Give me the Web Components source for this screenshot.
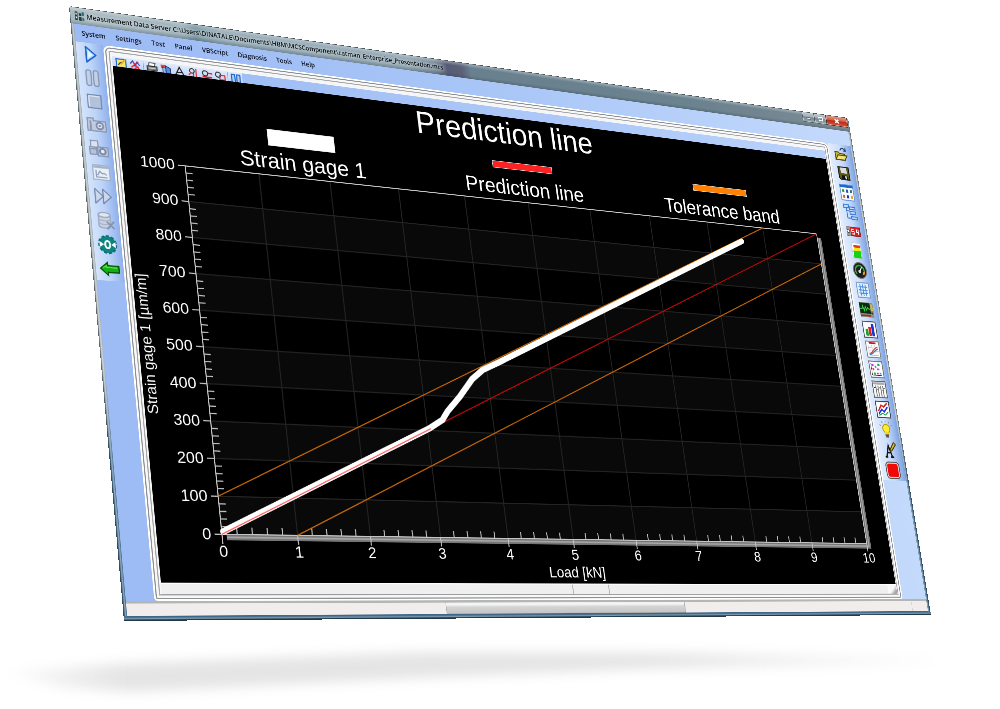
<!DOCTYPE html>
<html lang="en">
<head>
<meta charset="utf-8">
<title>Measurement Data Server</title>
<style>
    body {
        margin: 0;
        background: #fff;
        font-family: "Open Sans", "Noto Sans", sans-serif;
    }
</style>
</head>
<body>
<tilted-stage>
    <app-window caption="Measurement Data Server C:\Users\DINATALE\Documents\HBM\MCSComponent\catman_Enterprise_Presentation.mcs">
        <menu-bar slot="menu" items="System,Settings,Test,Panel,VBScript,Diagnosis,Tools,Help"></menu-bar>
        <tool-column slot="left" icons="play,pause,stop,camera,cameras,window,forward,database,zero,back"></tool-column>
        <chart-panel>
            <prediction-chart>
                <span slot="title">Prediction line</span>
                <legend-entry slot="legend" style="--color: #fff; --size: 31px">Strain gage 1</legend-entry>
                <legend-entry slot="legend" style="--color: #f22; --size: 14px">Prediction line</legend-entry>
                <legend-entry slot="legend" style="--color: #ff8205; --size: 14px">Tolerance band</legend-entry>
            </prediction-chart>
        </chart-panel>
        <tool-column slot="right" class="right" icons="folder,save,grid,tree,digits,bargraph,gauge,table,scope,bars,curve,scatter,columns,lines,bulb,text,record"></tool-column>
    </app-window>
</tilted-stage>

<script>
const ICONS = {
    play: '<path d="M9 3 L25 16 L9 29 Z" fill="#a9dcff" stroke="#1d5fc4" stroke-width="2.5" stroke-linejoin="round"/><path d="M12 9v13l8-6z" fill="#e6f6ff"/>',
    pause: '<rect x="6" y="3" width="8" height="26" rx="3" fill="#c3cfe2" stroke="#8394b5" stroke-width="2"/><rect x="18" y="3" width="8" height="26" rx="3" fill="#c3cfe2" stroke="#8394b5" stroke-width="2"/>',
    stop: '<rect x="5" y="5" width="22" height="22" fill="#b3c2db" stroke="#7486ab" stroke-width="2"/><path d="M7 25V7h18" fill="none" stroke="#e3eaf5" stroke-width="2"/>',
    camera: '<path d="M1 9V5h10v4h20v17H1z" fill="#c0cbdf" stroke="#8997b3" stroke-width="2"/><path d="M6 9v17" stroke="#8997b3" stroke-width="3"/><circle cx="21" cy="17" r="7" fill="#7f8fae"/><circle cx="21" cy="17" r="4" fill="#dfe7f3"/><circle cx="21" cy="17" r="2" fill="#7d8cab"/>',
    cameras: '<path d="M3 3h12v11H3z" fill="#dbe3f0" stroke="#8997b3" stroke-width="2"/><path d="M1 17V14h11v3" fill="none" stroke="#8997b3" stroke-width="2"/><path d="M1 17h11v9H1zM14 13h17v15H14z" fill="#b7c3da" stroke="#8997b3" stroke-width="2"/><circle cx="22" cy="20" r="6" fill="#7887a8"/><circle cx="22" cy="20" r="3" fill="#e8eef7"/>',
    window: '<rect x="3" y="4" width="27" height="24" fill="#e9eff8" stroke="#a3b1ca" stroke-width="2"/><path d="M4 7h25" stroke="#a3b1ca" stroke-width="4"/><path d="M8 12v12h18M10 21l4-7 4 4 3-1 4 3" fill="none" stroke="#8d9cba" stroke-width="2"/>',
    forward: '<path d="M3 4l13 12L3 28zM16 4l13 12-13 12z" fill="#cbd8ec" stroke="#7889ae" stroke-width="2" stroke-linejoin="round"/>',
    database: '<path d="M5 7v18c0 5 19 5 19 0V7" fill="#c9d2e0" stroke="#98a5bd" stroke-width="2"/><ellipse cx="14.500" cy="7" rx="9.500" ry="4" fill="#dfe6f0" stroke="#98a5bd" stroke-width="2"/><path d="M5 13c0 5 19 5 19 0M5 19c0 5 19 5 19 0" fill="none" stroke="#a9b4c9" stroke-width="2"/><path d="M18 18l12 11M30 17L18 30" stroke="#8594b2" stroke-width="3"/>',
    zero: '<circle cx="16" cy="16" r="14" fill="#0d857f"/><circle cx="16" cy="16" r="14" fill="none" stroke="#0b6f74" stroke-width="3" stroke-dasharray="5 3"/><path d="M3 11l7 5-7 5zM29 11l-7 5 7 5z" fill="#fff"/><ellipse cx="16" cy="16" rx="4" ry="6" fill="none" stroke="#fff" stroke-width="3"/>',
    back: '<path d="M1 16L13 6v5h18v11H13v5z" fill="#12b010" stroke="#064d06" stroke-width="2"/><path d="M5 15l6-4v3h17" fill="none" stroke="#4fe24c" stroke-width="2"/>',
    folder: '<path d="M3 12h8l3 3h11v12H3z" fill="#c9b338" stroke="#4d4310" stroke-width="2"/><path d="M3 27l6-9h21l-6 9z" fill="#f1e27a" stroke="#4d4310" stroke-width="2"/><path d="M15 9c3-6 9-6 12-1M28 3v6h-6" fill="none" stroke="#223a66" stroke-width="2"/>',
    save: '<path d="M4 4h24v24H7l-3-3z" fill="#5c5c14" stroke="#111" stroke-width="2"/><path d="M9 5h14v11H9z" fill="#d8dde4"/><path d="M10 20h13v8H10z" fill="#111"/><path d="M18 21h3v6h-3z" fill="#eee"/>',
    grid: '<rect x="1" y="1" width="30" height="30" fill="#fff" stroke="#6b9bdc" stroke-width="2"/><path d="M1 4h30" stroke="#1f66cc" stroke-width="5"/><path d="M5 10h5v6H5z" fill="#2f9f32"/><path d="M14 10h5v6h-5z" fill="#2b52c9"/><path d="M23 10h5v6h-5z" fill="#1d7c80"/><path d="M5 21h5v6H5z" fill="#e6672b"/><path d="M14 21h5v6h-5z" fill="#2432b0"/><path d="M23 21h5v6h-5z" fill="#e3a41f"/>',
    tree: '<g fill="#b9dcff" stroke="#3f79d8" stroke-width="2"><path d="M8 9v19h8M8 14h8M16 21h4" fill="none"/><path d="M2 2h12v6H2zM15 6h13v5H15zM15 15h13v5H15zM17 25h13v5H17z"/></g>',
    digits: '<rect x="0" y="8" width="32" height="17" fill="#d61d1d" stroke="#701414" stroke-width="1"/><rect x="0" y="8" width="9" height="17" fill="#999"/><circle cx="4" cy="16" r="3" fill="#fff" stroke="#333"/><path d="M17 12h-5v4h5v5h-5M23 11v6h5M27 12v10" fill="none" stroke="#fff" stroke-width="2"/>',
    bargraph: '<rect x="6" y="1" width="20" height="30" fill="#fff" stroke="#b9bfd0"/><path d="M10 5h15v5H10z" fill="#e43a2c"/><path d="M10 10h15v6H10z" fill="#f6e21b"/><path d="M8 16h17v14H8z" fill="#14d314"/>',
    gauge: '<circle cx="16" cy="16" r="15" fill="#1b1f1b" stroke="#777" stroke-width="2"/><path d="M8 23a10 10 0 1 1 16-1" fill="none" stroke="#2fae3c" stroke-width="3"/><path d="M25 18a10 10 0 0 1-3 6" fill="none" stroke="#e59c1f" stroke-width="4"/><path d="M15 18l6-9" stroke="#fff" stroke-width="2"/><circle cx="15" cy="18" r="3" fill="#ddd"/>',
    table: '<rect x="2" y="2" width="28" height="28" fill="#e4f1ff" stroke="#7b98c0" stroke-width="2"/><path d="M6 10h20M6 16h20M6 22h20M10 5v22M16 5v22M22 5v22" stroke="#4a90de" stroke-width="2"/>',
    scope: '<rect x="0" y="2" width="32" height="28" fill="#8d8d7a"/><rect x="1" y="3" width="24" height="20" fill="#0b2a12"/><path d="M2 14h4l2-5 3 9 3-8 2 6 3-4 2 2h4" fill="none" stroke="#35d14b" stroke-width="2"/><path d="M1 27h23" stroke="#a22" stroke-width="3"/><rect x="26" y="5" width="5" height="12" fill="#c9b94c"/><circle cx="28" cy="22" r="2" fill="#333"/>',
    bars: '<rect x="1" y="1" width="30" height="30" fill="#fff" stroke="#555" stroke-width="2"/><path d="M6 15h6v13H6z" fill="#15a22b"/><path d="M13 11h6v17h-6z" fill="#e22020"/><path d="M20 5h6v23h-6z" fill="#1c33cf"/>',
    curve: '<rect x="1" y="1" width="30" height="30" fill="#fdfdfd" stroke="#888" stroke-width="2"/><path d="M8 4h16" stroke="#b22" stroke-width="3"/><path d="M6 8v19h22M6 13h22M6 19h22M14 8v19M21 8v19" fill="none" stroke="#bbb"/><path d="M7 24c8-1 9-10 20-13" fill="none" stroke="#e33" stroke-width="2"/><path d="M7 26c9-1 11-9 20-11" fill="none" stroke="#37b" stroke-width="2"/>',
    scatter: '<rect x="1" y="1" width="30" height="30" fill="#fff" stroke="#777" stroke-width="2"/><path d="M6 6h5v4H6zM17 14h6v3h-6z" fill="#c43bd0"/><path d="M20 5h5v4h-5zM9 22h4v4H9z" fill="#1ba64a"/><path d="M13 9h4v4h-4zM22 22h4v3h-4z" fill="#279bd8"/><path d="M7 14h4v4H7zM16 22h4v3h-4z" fill="#e03a5c"/><path d="M5 5v22h22" fill="none" stroke="#222"/>',
    columns: '<rect x="1" y="1" width="30" height="30" fill="#fafafa" stroke="#666" stroke-width="2"/><path d="M3 5h26" stroke="#aaa" stroke-width="4"/><path d="M8 9v20M13 9v20M19 9v20M24 9v20" stroke="#777" stroke-width="2"/><path d="M3 13h4M9 16h3M15 13h3M20 18h3M25 14h4" stroke="#333"/>',
    lines: '<rect x="1" y="1" width="30" height="30" fill="#fff" stroke="#444" stroke-width="2"/><path d="M5 19l8-11 5 3 9-7" fill="none" stroke="#d92222" stroke-width="3"/><path d="M5 24l8-8 5 4 9-9" fill="none" stroke="#2037d8" stroke-width="3"/><path d="M5 27l9-4 6 3 7-6" fill="none" stroke="#1a9c37" stroke-width="2"/>',
    bulb: '<path d="M5 9l-3-2M9 4L7 1M16 2V0M23 4l2-3M27 9l3-2" stroke="#8b98ad" stroke-width="2"/><circle cx="16" cy="14" r="8" fill="#ffec2e" stroke="#b99c12" stroke-width="2"/><path d="M12 20h8v5h-8z" fill="#f3d91a"/><path d="M12 26h8M13 29h6" stroke="#555" stroke-width="3"/>',
    text: '<path d="M7 29L14 8l6 21M9 21h10M4 29h6M16 29h8" fill="none" stroke="#151515" stroke-width="3"/><path d="M18 14L27 2l4 4-10 11-5 2z" fill="#d9b92c" stroke="#4a3c08" stroke-width="2"/>',
    record: '<rect x="1" y="1" width="30" height="30" rx="7" fill="#ddd" stroke="#555" stroke-width="2"/><rect x="4" y="4" width="24" height="24" rx="4" fill="#f30808"/>',
    edit: '<rect x="3" y="4" width="25" height="22" fill="#f8e66a" stroke="#2766bd" stroke-width="3"/><path d="M8 20c4-8 10-9 12-6" fill="none" stroke="#333" stroke-width="3"/><path d="M14 18L27 3" stroke="#e5ad18" stroke-width="4"/>',
    clear: '<path d="M3 12l7-8 5 14 6-12 6 9" fill="none" stroke="#2c4bd0" stroke-width="3"/><path d="M5 22L24 5M9 5l19 23M12 26l12-8" stroke="#e21f2d" stroke-width="3"/>',
    print: '<path d="M9 3h16l-3 9H7z" fill="#fff" stroke="#333" stroke-width="2"/><path d="M3 12h26v11H3z" fill="#777" stroke="#222" stroke-width="2"/><path d="M7 17h18" stroke="#ddd" stroke-width="3"/>',
    copy: '<path d="M3 4h13v9H3z" fill="#e04a32"/><path d="M8 10h13v16H8z" fill="#8fc1f5" stroke="#225" stroke-width="2"/><path d="M16 6l12 6v16H16z" fill="#4d91e2" stroke="#225" stroke-width="2"/>',
    font: '<path d="M5 26L16 5l11 21M9 19h14" fill="none" stroke="#222" stroke-width="3"/>',
    cursor: '<circle cx="13" cy="10" r="6" fill="none" stroke="#333" stroke-width="3"/><path d="M24 3v27M10 15L4 22M17 15l-2 14" fill="none" stroke="#d22" stroke-width="3"/>',
    zoomx: '<circle cx="12" cy="12" r="7" fill="none" stroke="#333" stroke-width="3"/><path d="M20 11h11M4 22h26" stroke="#d22" stroke-width="4"/>',
    zoombox: '<circle cx="11" cy="11" r="7" fill="none" stroke="#333" stroke-width="3"/><path d="M15 12h14v12H15z" fill="none" stroke="#d22" stroke-width="3"/>',
    hold: '<path d="M4 5h9v25H4zM18 5h9v25h-9z" fill="#a8d0fb" stroke="#1d5fc4" stroke-width="3"/>'
};

const CORNERS = [[69, 6], [848, 118], [931, 615], [124, 621]];
const STAGE_WIDTH = 1000;

// perspective that lays a w x h box on the four corners (clockwise from top left)
function quadMatrix(w, h, corners) {
    const [[x0, y0], [x1, y1], [x2, y2], [x3, y3]] = corners;
    const dx1 = x1 - x2, dx2 = x3 - x2, dx3 = x0 - x1 + x2 - x3;
    const dy1 = y1 - y2, dy2 = y3 - y2, dy3 = y0 - y1 + y2 - y3;
    const den = dx1 * dy2 - dx2 * dy1;
    const g = (dx3 * dy2 - dx2 * dy3) / den;
    const k = (dx1 * dy3 - dx3 * dy1) / den;
    return [
        (x1 - x0 + g * x1) / w, (y1 - y0 + g * y1) / w, 0, g / w,
        (x3 - x0 + k * x3) / h, (y3 - y0 + k * y3) / h, 0, k / h,
        0, 0, 1, 0,
        x0, y0, 0, 1
    ];
}

class TiltedStage extends HTMLElement {
    constructor() {
        super();
        this.attachShadow({mode: 'open'});
        this.fit = this.fit.bind(this);
    }

    connectedCallback() {
        this.shadowRoot.innerHTML = `
            <style>
                :host {
                    display: block;
                    position: relative;
                    width: 100%;
                    aspect-ratio: 1000 / 709;
                    overflow: hidden;
                }

                .shadow {
                    position: absolute;
                    inset: 0;
                    width: 100%;
                    height: 100%;
                }

                .board {
                    position: absolute;
                    top: 0;
                    left: 0;
                    width: 1680px;
                    height: 1050px;
                    transform-origin: 0 0;
                }
            </style>

            <svg class="shadow" viewBox="0 0 1000 709" aria-hidden="true">
                <defs>
                    <linearGradient id="fade">
                        <stop offset="0" stop-color="#000" stop-opacity="0.02"/>
                        <stop offset="0.12" stop-color="#000" stop-opacity="0.1"/>
                        <stop offset="0.7" stop-color="#000" stop-opacity="0.1"/>
                        <stop offset="1" stop-color="#000" stop-opacity="0.01"/>
                    </linearGradient>
                    <filter id="soft" x="-10%" y="-60%" width="120%" height="220%"><feGaussianBlur stdDeviation="10 6"/></filter>
                </defs>
                <path d="M10 672 L110 664 L420 652 L700 653 L935 658 L930 664 L640 669 L420 678 L130 692 L60 687 Z" fill="url(#fade)" filter="url(#soft)"/>
            </svg>
            <div class="board"><slot></slot></div>
        `;
        this.fit();
        window.addEventListener('resize', this.fit);
    }

    disconnectedCallback() {
        window.removeEventListener('resize', this.fit);
    }

    fit() {
        const board = this.shadowRoot.querySelector('.board');
        const scale = this.clientWidth / STAGE_WIDTH;
        const corners = CORNERS.map(([x, y]) => [x * scale, y * scale]);
        board.style.transform = `matrix3d(${quadMatrix(board.offsetWidth, board.offsetHeight, corners).map(n => n.toFixed(9))})`;
    }
}

class AppWindow extends HTMLElement {
    constructor() {
        super();
        this.attachShadow({mode: 'open'});
    }

    connectedCallback() {
        // one span for each word or folder of the path
        const parts = this.getAttribute('caption').match(/[^ \\]+[ \\]?/g);
        this.shadowRoot.innerHTML = `
            <style>
                :host {
                    display: flex;
                    flex-direction: column;
                    box-sizing: border-box;
                    height: 100%;
                    padding: 1px 6px 8px;
                    border-radius: 5px 8px 0 0;
                    background:
                        linear-gradient(to top, #22394a 2px, #8ea5b5 3px, #3d678a 6px, transparent 9px),
                        linear-gradient(to right, rgba(40, 55, 65, 0.8), transparent 2px, rgba(255, 255, 255, 0.5) 3px, transparent 6px),
                        linear-gradient(to left, rgba(40, 55, 65, 0.6), transparent 3px, rgba(255, 255, 255, 0.5) 4px, transparent 7px),
                        linear-gradient(#99a6ad, #a9b3b9 60%, #47708f 75%, #3f6584);
                    box-shadow: inset 0 2px #4a545b;
                    overflow: hidden;
                }

                header {
                    display: flex;
                    align-items: center;
                    height: 30px;
                    margin: 0 -5px;
                    padding: 0 3px 0 7px;
                    background:
                        linear-gradient(rgba(255, 255, 255, 0.35), transparent 25%, transparent 75%, rgba(50, 65, 75, 0.3)),
                        linear-gradient(to right, #a9b9c0, #9bafb8 200px, #7896a4 225px, #93a9b4 270px, #8fa5b1 640px, #7b8c9b 695px, #555b74 725px, #5a6178 755px, #69808f 775px, #6b828f 1300px, #7c8b94);
                }

                .logo {
                    width: 18px;
                    height: 18px;
                    margin-right: 3px;
                }

                .caption {
                    flex: 1;
                    font-size: 12px;
                    font-weight: 600;
                    line-height: 20px;
                    white-space: pre;
                    color: #0b0f12;
                    text-shadow: 0 0 6px #dde6ea, 0 0 10px #dde6ea;
                }

                .buttons {
                    display: flex;
                    align-self: flex-start;
                }

                .buttons button {
                    display: flex;
                    align-items: center;
                    justify-content: center;
                    width: 31px;
                    height: 21px;
                    padding: 0;
                    border: 1px solid #47545d;
                    border-top: 0;
                    background: linear-gradient(#c3cdd3, #9eacb4 45%, #74858f 50%, #98a8b1);
                    box-shadow: inset 0 0 0 1px #c9d3d8;
                }

                .buttons .close {
                    width: 56px;
                    border-color: #4c1b14;
                    background: linear-gradient(#e09c8d, #cf5c45 45%, #b52b14 50%, #d4593d);
                    box-shadow: inset 0 0 0 1px #e9b0a3;
                }

                .client {
                    display: flex;
                    flex: 1;
                    flex-direction: column;
                    min-height: 0;
                    background: linear-gradient(to right, #9dbbf4, #a9c6f7 50%, #c4dafc);
                }

                .body {
                    display: grid;
                    flex: 1;
                    grid-template-columns: 48px minmax(0, 1fr) 60px;
                    min-height: 0;
                    border-bottom: 4px solid #b4b6b4;
                }

                footer {
                    display: grid;
                    grid-template-columns: 579fr 503fr 546fr 40fr;
                    height: 20px;
                    background: #f1eded;
                }

                footer div {
                    border-left: 1px solid #d0cccc;
                }

                footer div:first-child {
                    border-left: 0;
                }

                footer .bar {
                    border: 1px solid #aaa;
                    border-top-color: #eee;
                    background: linear-gradient(#f4f4f4 3px, #d4d4d4 7px, #c5c5c5);
                }
            </style>

            <header>
                <svg class="logo" viewBox="0 0 16 16" aria-hidden="true">
                    <path d="M1 1h4v14H1zM7 3h4v4H7zM7 9h4v6H7z" fill="#27343b"/>
                    <path d="M2 3h2v3H2zM2 9h2v3H2z" fill="#e6eef1"/>
                    <path d="M12 1h3v6h-3zM12 10h3v5h-3z" fill="#1f6d70"/>
                </svg>
                <span class="caption">${parts.map(part => `<span>${part}</span>`).join('')}</span>
                <div class="buttons">
                    <button aria-label="Minimize"><svg width="14" height="10"><path d="M2 6h10v3H2z" fill="#fff" stroke="#445"/></svg></button>
                    <button aria-label="Maximize"><svg width="14" height="12"><path d="M3 3h9v7H3z" fill="none" stroke="#fff" stroke-width="2"/></svg></button>
                    <button class="close" aria-label="Close"><svg width="14" height="12"><path d="M2 2l10 8M12 2L2 10" stroke="#fff" stroke-width="3"/></svg></button>
                </div>
            </header>
            <div class="client">
                <slot name="menu"></slot>
                <div class="body">
                    <slot name="left"></slot>
                    <slot></slot>
                    <slot name="right"></slot>
                </div>
                <footer><div></div><div class="bar"></div><div></div><div></div></footer>
            </div>
        `;
    }
}

class MenuBar extends HTMLElement {
    constructor() {
        super();
        this.attachShadow({mode: 'open'});
    }

    connectedCallback() {
        const items = this.getAttribute('items').split(',');
        this.shadowRoot.innerHTML = `
            <style>
                :host {
                    display: flex;
                    align-items: center;
                    height: 32px;
                    padding-left: 3px;
                }

                button {
                    padding: 0 9px;
                    border: 0;
                    background: none;
                    font: 600 12px/20px "Open Sans", "Noto Sans", sans-serif;
                    color: #0a1020;
                }
            </style>
            ${items.map(item => `<button>${item}</button>`).join('')}
        `;
    }
}

class ToolButton extends HTMLElement {
    constructor() {
        super();
        this.attachShadow({mode: 'open'});
    }

    connectedCallback() {
        const icon = this.getAttribute('icon');
        this.shadowRoot.innerHTML = `
            <style>
                :host {
                    display: flex;
                    align-items: center;
                    justify-content: center;
                }

                button {
                    display: block;
                    padding: 0;
                    border: 0;
                    background: none;
                }

                svg {
                    display: block;
                    width: var(--icon, 34px);
                    height: var(--icon, 34px);
                }
            </style>
            <button aria-label="${icon}"><svg viewBox="0 0 32 32">${ICONS[icon]}</svg></button>
        `;
    }
}

class ToolColumn extends HTMLElement {
    constructor() {
        super();
        this.attachShadow({mode: 'open'});
    }

    connectedCallback() {
        const icons = this.getAttribute('icons').split(',');
        this.shadowRoot.innerHTML = `
            <style>
                :host {
                    display: block;
                }

                .tools {
                    display: grid;
                    grid-auto-rows: 42px;
                    border-radius: 0 0 4px 0;
                    background: linear-gradient(to right, #d3e3fb, #bdd4f8 50%, #8fb0ec);
                }

                :host(.right) .tools {
                    --icon: 36px;
                    background: linear-gradient(to right, #e3edfd, #c9dcfa 50%, #7ea3e3);
                }
            </style>
            <div class="tools">
                ${icons.map(icon => `<tool-button icon="${icon}"></tool-button>`).join('')}
            </div>
        `;
    }
}

class ChartPanel extends HTMLElement {
    constructor() {
        super();
        this.attachShadow({mode: 'open'});
    }

    connectedCallback() {
        const button = icon => `<tool-button icon="${icon}"></tool-button>`;
        this.shadowRoot.innerHTML = `
            <style>
                :host {
                    display: flex;
                    flex-direction: column;
                    min-width: 0;
                    box-sizing: border-box;
                    padding: 18px 12px 10px 14px;
                    border-radius: 12px 12px 6px 6px;
                    background: #f6f6f6;
                    box-shadow:
                        inset 0 0 0 3px #fff,
                        inset 0 0 0 5px #8d8f90,
                        inset 0 0 0 9px #f8f8f8,
                        inset 0 0 0 11px #a4a6a8;
                }

                .strip {
                    height: 18px;
                    overflow: hidden;
                    background: linear-gradient(to right, #9dbbf4, #b9d2fb);
                }

                .tools {
                    --icon: 22px;
                    display: flex;
                    width: 238px;
                    padding: 1px 0 0 3px;
                    box-sizing: border-box;
                    background: linear-gradient(#dfeafc, #bcd3f8);
                }

                tool-button {
                    flex: 1;
                }

                .tools i {
                    width: 1px;
                    margin: 0 2px;
                    background: #86a3d6;
                }

                ::slotted(*) {
                    flex: 1;
                    min-height: 0;
                }

                .status {
                    display: grid;
                    grid-template-columns: 780fr 77fr 655fr 22fr;
                    height: 20px;
                    border-top: 2px solid #fff;
                    border-bottom: 1px solid #999;
                    box-sizing: border-box;
                    background: #efefef;
                }

                .status div + div {
                    border-left: 2px solid #b5b5b5;
                }

                .status .grip {
                    border-color: #fafafa;
                    background: linear-gradient(135deg, #f8f8f8 50%, #a9a9a9 80%);
                }
            </style>
            <div class="strip">
                <div class="tools">
                    ${['edit', 'clear'].map(button).join('')}<i></i>
                    ${['print', 'copy', 'font', 'cursor', 'zoomx', 'zoombox'].map(button).join('')}<i></i>
                    ${button('hold')}
                </div>
            </div>
            <slot></slot>
            <div class="status"><div></div><div></div><div></div><div class="grip"></div></div>
        `;
    }
}

class LegendEntry extends HTMLElement {
    constructor() {
        super();
        this.attachShadow({mode: 'open'});
    }

    connectedCallback() {
        this.shadowRoot.innerHTML = `
            <style>
                :host {
                    display: grid;
                    grid-template-rows: 31px 44px;
                    gap: 6px;
                    place-items: center;
                    font-size: 41px;
                    line-height: 44px;
                    white-space: nowrap;
                }

                .swatch {
                    width: 130px;
                    height: var(--size);
                    box-sizing: border-box;
                    border: 1px solid #ddd;
                    background: var(--color);
                }
            </style>
            <div class="swatch"></div>
            <div><slot></slot></div>
        `;
    }
}

class PredictionChart extends HTMLElement {
    constructor() {
        super();
        this.attachShadow({mode: 'open'});
        this.left = 114;
        this.top = 5;
        this.width = 1363;
        this.height = 641;
    }

    x(load) {
        return this.left + load * this.width / 10;
    }

    y(strain) {
        return this.top + this.height - strain * this.height / 1000;
    }

    line(x1, y1, x2, y2, name) {
        return `<path class="${name}" d="M${x1} ${y1}L${x2} ${y2}"/>`;
    }

    grid() {
        let out = '';
        for (let i = 1; i < 10; i += 2) {
            out += `<rect x="${this.left}" y="${this.y(i * 100)}" width="${this.width}" height="${this.height / 10}" fill="#090909"/>`;
        }
        for (let i = 1; i < 10; i++) {
            out += this.line(this.x(i), this.y(0), this.x(i), this.y(1000), 'grid');
            out += this.line(this.x(0), this.y(i * 100), this.x(10), this.y(i * 100), 'grid');
        }
        return out;
    }

    axes() {
        const bottom = this.y(0);
        const right = this.x(10);
        let out = `
            <path d="M${this.left + 8} ${bottom + 1}H${right + 1}V${this.top + 9}H${right + 10}V${bottom + 10}H${this.left + 8}Z" class="side"/>
            <path d="M${this.left + 8} ${bottom + 5}H${right + 5}V${this.top + 9}" class="bevel"/>`;
        out += this.line(this.left - 13, this.top, right, this.top, 'axis');
        out += this.line(this.left, this.top, this.left, bottom, 'axis');
        out += this.line(this.left, bottom, right, bottom, 'axis');
        out += this.line(right, this.top, right, bottom, 'axis');
        for (let i = 0; i <= 10; i++) {
            const x = this.x(i);
            const y = this.y(i * 100);
            out += this.line(x, bottom, x, bottom + 16, 'axis');
            out += this.line(this.left - 13, y, this.left, y, 'axis');
            out += `<text x="${x}" y="${bottom + 38}" text-anchor="middle">${i}</text>`;
            out += `<text x="${this.left - 19}" y="${y + 9}" text-anchor="end">${i * 100}</text>`;
            for (let k = 1; k < 5 && i < 10; k++) {
                const mx = this.x(i + k / 5);
                const my = this.y(i * 100 + k * 20);
                out += this.line(mx, bottom - 12, mx, bottom, 'axis');
                out += this.line(this.left, my, this.left + 12, my, 'axis');
            }
        }
        return out;
    }

    series(points, name) {
        const d = points.map(([load, strain]) => `${this.x(load).toFixed(1)} ${this.y(strain).toFixed(1)}`);
        return `<path class="${name}" d="M${d.join('L')}"/>`;
    }

    connectedCallback() {
        const middle = this.top + this.height / 2;
        const measured = [[0.02, 7], [3.03, 306], [3.24, 332], [3.33, 357], [3.54, 401], [3.76, 454], [3.94, 483], [4.2, 508], [8.58, 949]];
        this.shadowRoot.innerHTML = `
            <style>
                :host {
                    display: flex;
                    flex-direction: column;
                    background: #000;
                    color: #fff;
                    font-family: "Liberation Sans", Arial, sans-serif;
                }

                h1 {
                    margin: 0;
                    font-size: 61px;
                    font-weight: normal;
                    line-height: 64px;
                    text-align: center;
                }

                .legend {
                    display: grid;
                    grid-template-columns: repeat(3, minmax(0, 1fr));
                    margin: 17px 59px 0 112px;
                }

                svg {
                    display: block;
                    flex: 1;
                    min-height: 0;
                    width: 100%;
                    overflow: visible;
                }

                text {
                    fill: #fff;
                    font-size: 28px;
                }

                .unit {
                    font-size: 26px;
                }

                path {
                    fill: none;
                }

                .side {
                    fill: #747474;
                }

                .grid {
                    stroke: #242424;
                    stroke-width: 2;
                }

                .axis {
                    stroke: #c4c4c4;
                    stroke-width: 2;
                }

                .bevel {
                    stroke: #a6a6a6;
                    stroke-width: 3;
                }

                .band {
                    stroke: #c86808;
                    stroke-width: 2;
                }

                .prediction {
                    stroke: #c00a0a;
                    stroke-width: 2;
                }

                .overlap {
                    stroke: #ff6464;
                    stroke-width: 2;
                }

                .measured {
                    stroke: #fff;
                    stroke-width: 11;
                    stroke-linejoin: round;
                    stroke-linecap: round;
                }
            </style>
            <h1><slot name="title"></slot></h1>
            <div class="legend"><slot name="legend"></slot></div>
            <svg viewBox="0 0 1534 727">
                ${this.grid()}
                ${this.axes()}
                ${this.series([[0, 100], [9, 1000]], 'band')}
                ${this.series([[1, 0], [10, 900]], 'band')}
                ${this.series([[0, 0], [10, 1000]], 'prediction')}
                ${this.series(measured, 'measured')}
                ${this.series([[0, 0], [3.05, 305]], 'overlap')}
                <text x="${this.x(5)}" y="716" text-anchor="middle">Load [kN]</text>
                <text class="unit" transform="translate(23 ${middle}) rotate(-90)" text-anchor="middle">Strain gage 1 [µm/m]</text>
            </svg>
        `;
    }
}

customElements.define('tool-button', ToolButton);
customElements.define('tool-column', ToolColumn);
customElements.define('menu-bar', MenuBar);
customElements.define('legend-entry', LegendEntry);
customElements.define('prediction-chart', PredictionChart);
customElements.define('chart-panel', ChartPanel);
customElements.define('app-window', AppWindow);
customElements.define('tilted-stage', TiltedStage);
</script>
</body>
</html>
